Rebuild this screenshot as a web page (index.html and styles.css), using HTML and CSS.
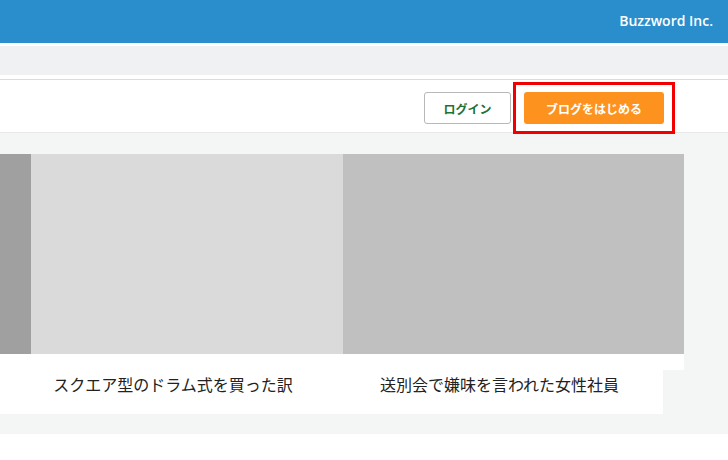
FILE: index.html
```html
<!DOCTYPE html>
<html lang="ja">
<head>
    <meta charset="UTF-8">
    <meta name="viewport" content="width=device-width, initial-scale=1.0">
    <title>Buzzword Blog</title>
    <link rel="stylesheet" href="styles.css">
</head>
<body>
    <header class="site-header">
        <span class="brand">Buzzword Inc.</span>
    </header>

    <nav class="sub-nav"></nav>

    <div class="toolbar">
        <button class="btn btn-login">ログイン</button>
        <span class="highlight">
            <button class="btn btn-start">ブログをはじめる</button>
        </span>
    </div>

    <main class="feature">
        <div class="slides">
            <div class="slide slide-narrow">
                <div class="thumb thumb-dark"></div>
                <div class="caption"></div>
            </div>
            <div class="slide slide-mid">
                <div class="thumb thumb-light"></div>
                <div class="caption">スクエア型のドラム式を買った訳</div>
            </div>
            <div class="slide slide-wide">
                <div class="thumb thumb-mid"></div>
                <div class="caption">送別会で嫌味を言われた女性社員</div>
            </div>
        </div>
    </main>
</body>
</html>
```

FILE: styles.css
```css
/* General */
body {
    margin: 0;
    background-color: #ffffff;
    font-family: "Noto Sans CJK JP", "Noto Sans", sans-serif;
    color: #222222;
}

/* Header */
.site-header {
    height: 43px;
    background-color: #298ecb;
    display: flex;
    align-items: center;
    justify-content: flex-end;
    padding-right: 15px;
}

.brand {
    font-family: "Open Sans", "Noto Sans", sans-serif;
    font-weight: 600;
    font-size: 14px;
    color: #ffffff;
    margin-top: -2px;
}

.sub-nav {
    margin-top: 3px;
    height: 29px;
    background-color: #f0f1f3;
}

/* Toolbar */
.toolbar {
    margin-top: 4px;
    height: 40px;
    border-top: 1px solid #dddddd;
    border-bottom: 1px solid #e8e9e9;
    display: flex;
    justify-content: flex-end;
    align-items: flex-start;
    gap: 13px;
    padding: 12px 64px 0 0;
}

.btn {
    height: 32px;
    border-radius: 3px;
    font-family: "Noto Sans CJK JP", sans-serif;
    font-size: 12px;
    font-weight: 700;
    cursor: pointer;
    padding: 0;
}

.btn-login {
    width: 87px;
    background-color: #ffffff;
    border: 1px solid #b8b8b8;
    color: #1d7236;
}

.btn-start {
    width: 140px;
    background-color: #fd921e;
    border: none;
    color: #ffffff;
    display: block;
}

.highlight {
    position: relative;
    display: block;
}

.highlight::after {
    content: "";
    position: absolute;
    top: -10px;
    bottom: -10px;
    left: -11px;
    right: -11px;
    border: 3px solid #f00000;
    pointer-events: none;
}

/* Feature slider */
.feature {
    background-color: #f4f5f5;
    padding: 21px 0 20px;
}

.slides {
    display: flex;
    width: 684px;
}

.slide {
    display: flex;
    flex-direction: column;
}

.slide-narrow { width: 31px; }
.slide-mid { width: 312px; }
.slide-wide { width: 341px; }

.thumb {
    height: 200px;
}

.thumb-dark { background-color: #a0a0a0; }
.thumb-light { background-color: #dadada; }
.thumb-mid { background-color: #c0c0c0; }

.caption {
    height: 60px;
    background-color: #ffffff;
    display: flex;
    align-items: center;
    justify-content: center;
    padding-right: 28px;
    font-size: 16px;
    white-space: nowrap;
}

.slide-wide .caption {
    background:
        linear-gradient(#ffffff, #ffffff) 0 0 / 100% 16px no-repeat,
        linear-gradient(#ffffff, #ffffff) 0 0 / 320px 100% no-repeat;
}
```
